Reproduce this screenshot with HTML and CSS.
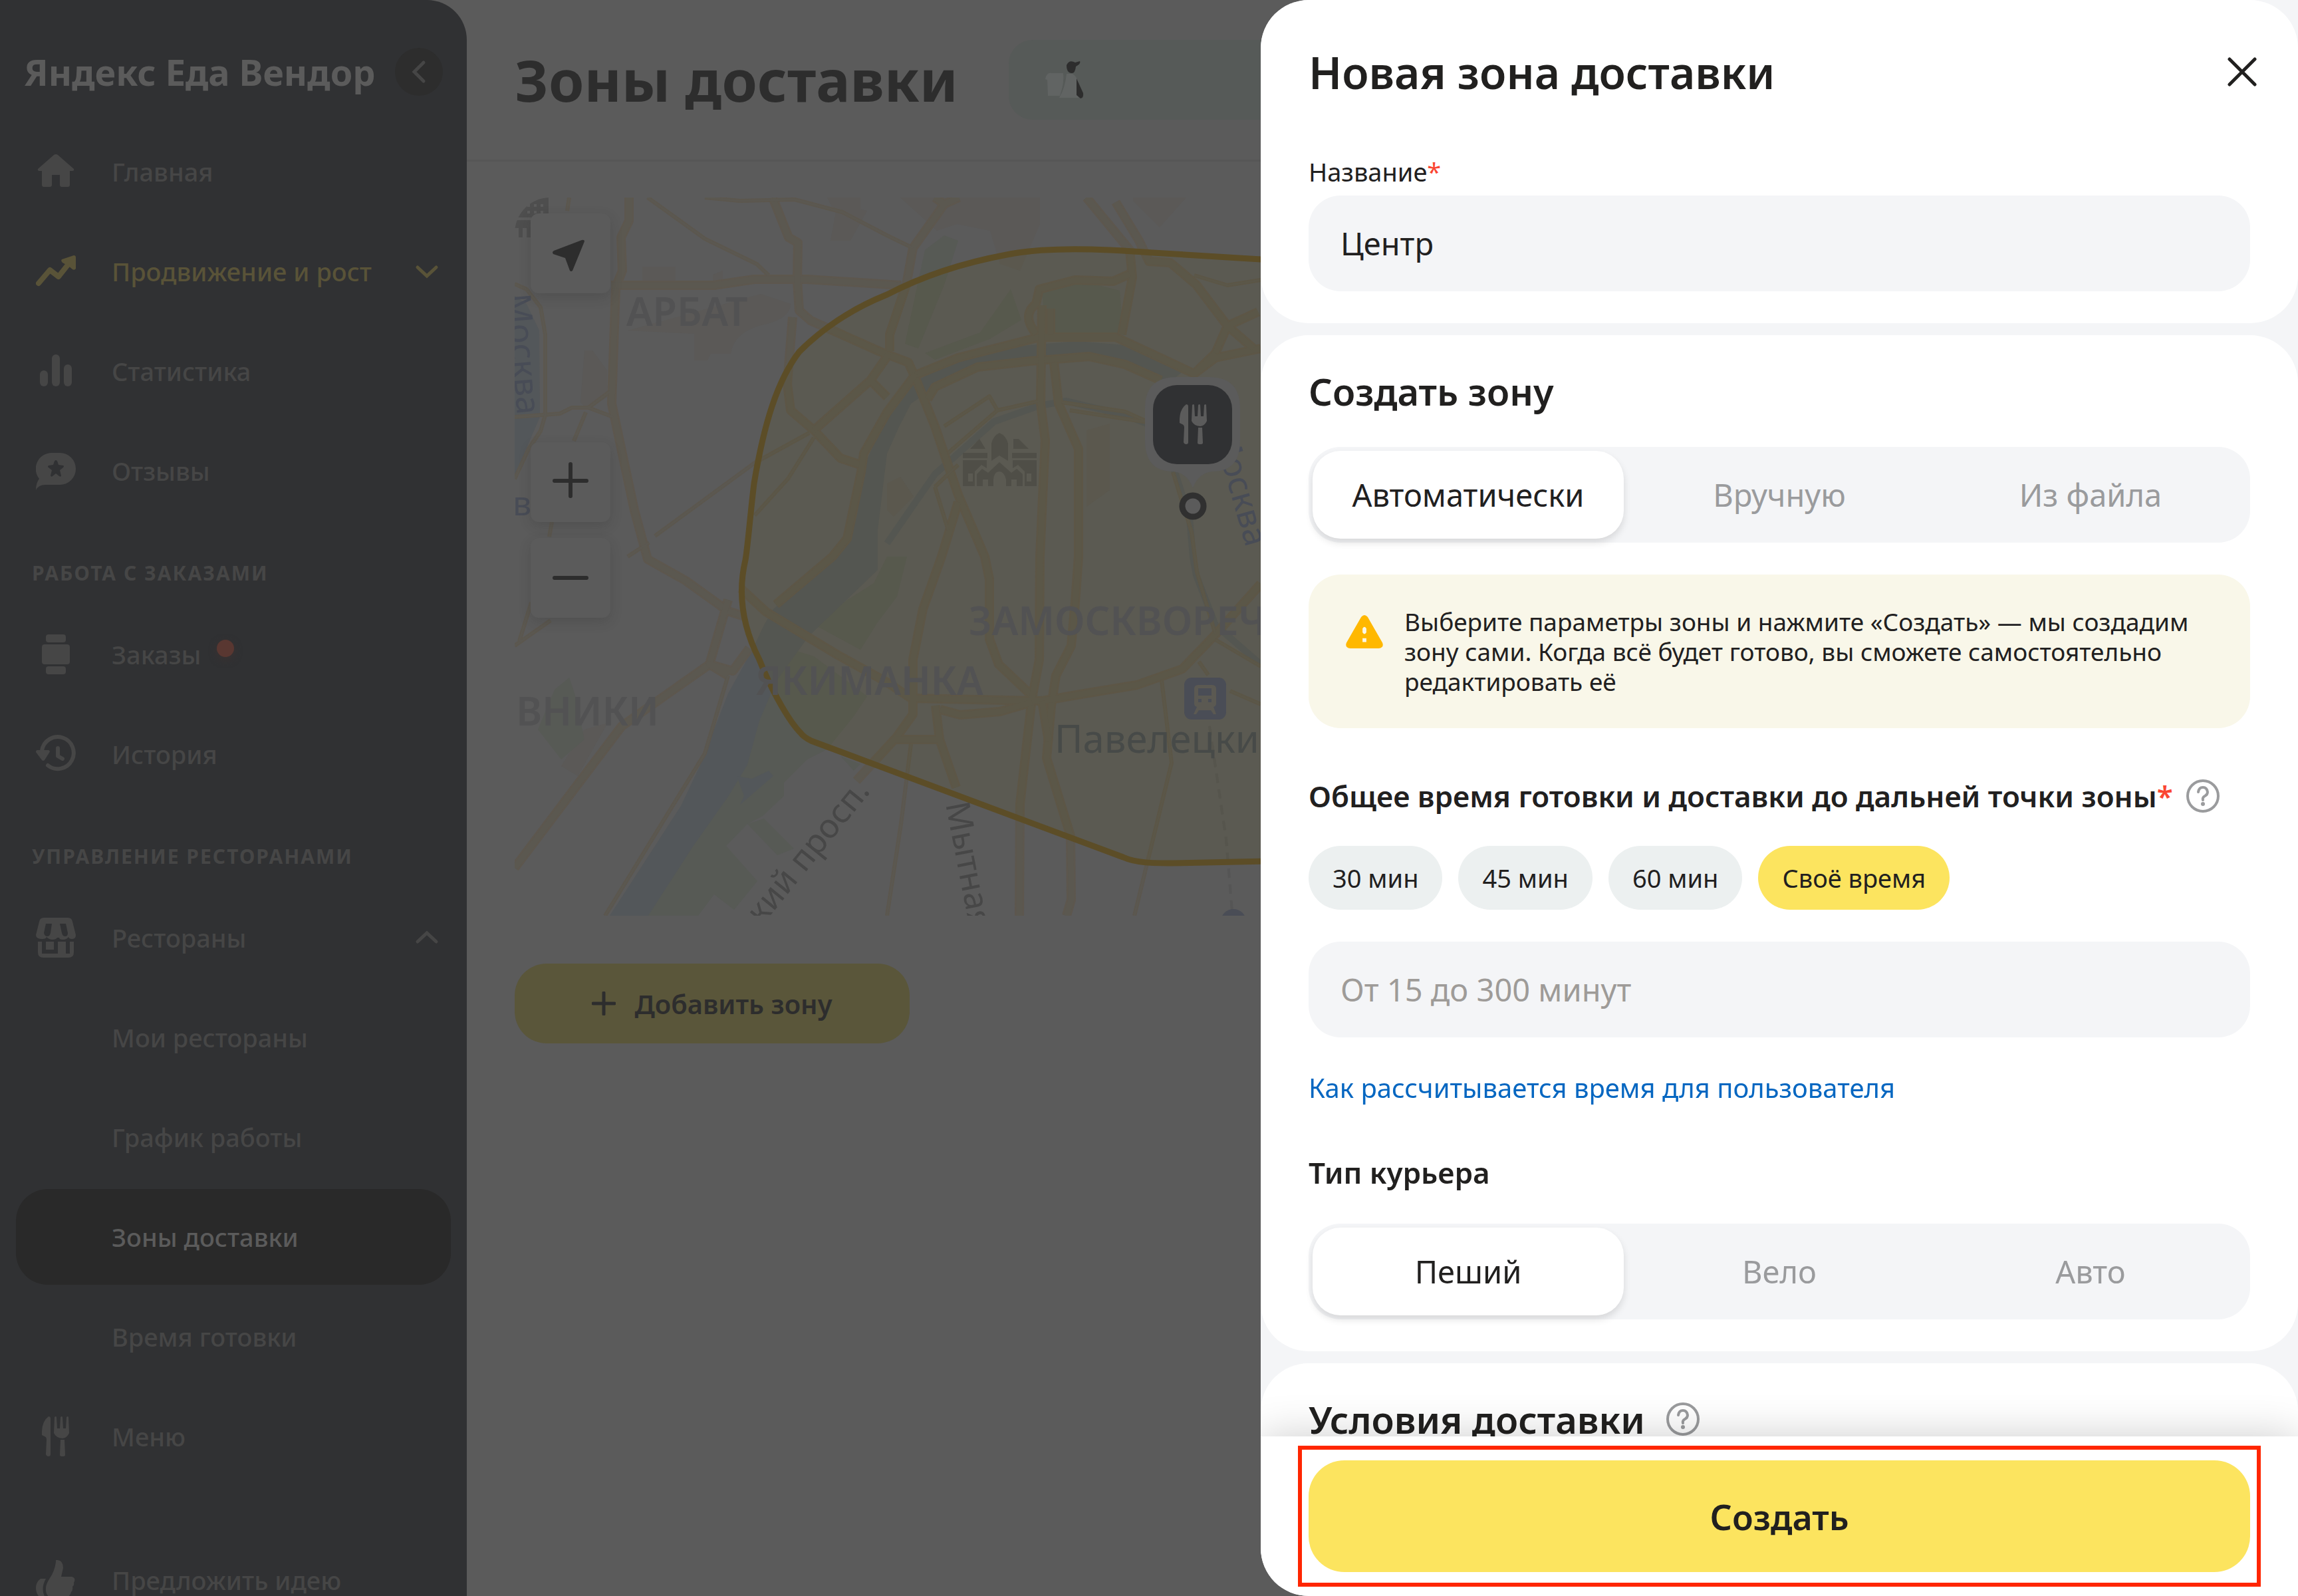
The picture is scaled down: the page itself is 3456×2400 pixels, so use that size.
FILE: index.html
```html
<!DOCTYPE html>
<html lang="ru">
<head>
  <meta charset="UTF-8" />
  <title>Зоны доставки</title>
  <link rel="stylesheet" href="styles.css">
</head>
<body>
  <svg class="sprite" aria-hidden="true">
    <symbol id="cutlery" viewBox="0 0 42 60">
      <path d="M13 3v54q0 3-3 3t-4-3l1-22q0-4-3-5l-4-2Q-1 8 10 0q3 0 3 3z" />
      <path d="M20 1q2-2 3 0l1 17h4l1-17q2-2 3 0l1 17h4l1-17q2-2 3 0l1 24q-3 7-10 8-10-1-13-8z" transform="translate(-1 0)" />
      <path d="M28 35h6l1 23q0 2-4 2t-4-2z" />
    </symbol>
    <symbol id="help" viewBox="0 0 50 50">
      <circle cx="25" cy="25" r="23" fill="none" stroke="currentColor" stroke-width="4" />
      <path d="M18 19q1-7 7-7t7 7q0 4-4 6t-3 6" fill="none" stroke="currentColor" stroke-width="4" stroke-linecap="round" />
      <circle cx="25" cy="37" r="3" fill="currentColor" />
    </symbol>
  </svg>

  <div class="app">
    <aside class="sidebar">
      <div class="sidebar-head">
        <span class="brand">Яндекс Еда Вендор</span>
        <button class="collapse" aria-label="Свернуть меню">
          <svg viewBox="0 0 72 72"><path d="M43 22 29 36l14 14" /></svg>
        </button>
      </div>

      <nav class="menu">
        <a href="#" class="menu-item">
          <svg class="menu-icon" viewBox="0 0 60 60"><path d="M30 4q2 0 3 1l24 21q1 3-2 3h-4v21q0 3-3 3H39q-3 0-3-3V35H24v15q0 3-3 3H12q-3 0-3-3V29H5q-3 0-2-3L27 5q1-1 3-1z" /></svg>
          <span>Главная</span>
        </a>
        <a href="#" class="menu-item promo">
          <svg class="menu-icon" viewBox="0 0 60 60"><path class="line" d="M4 48 21 28l13 10 15-19" /><path d="m39 12 18-6q3 0 3 3v17q-2 3-5 1l-6-5-9-5q-3-3-1-5z" /></svg>
          <span>Продвижение и рост</span>
          <svg class="chevron" viewBox="0 0 36 36"><path d="m4 12 14 13 14-13" /></svg>
        </a>
        <a href="#" class="menu-item">
          <svg class="menu-icon" viewBox="0 0 60 60"><rect x="6" y="29" width="12" height="24" rx="6" /><rect x="24" y="5" width="12" height="48" rx="6" /><rect x="42" y="20" width="12" height="33" rx="6" /></svg>
          <span>Статистика</span>
        </a>
        <a href="#" class="menu-item">
          <svg class="menu-icon" viewBox="0 0 60 60"><path fill-rule="evenodd" d="M24 3h12a24 24 0 0 1 0 48H14Q4 51 0 59 0 48 5 42A24 24 0 0 1 24 3zm6 11q-2 0-3 4l-1 3-7 1q-2 2 0 3l5 4-2 8q1 3 3 1l5-4 5 4q3 2 3-1l-2-8 5-4q2-2 0-3l-7-1-1-3q-1-4-3-4z" /></svg>
          <span>Отзывы</span>
        </a>

        <h2 class="menu-title">Работа с заказами</h2>
        <a href="#" class="menu-item">
          <svg class="menu-icon" viewBox="0 0 60 60"><rect x="15" y="0" width="30" height="12" rx="4" /><rect x="9" y="15" width="42" height="30" rx="4" /><rect x="15" y="48" width="30" height="12" rx="4" /></svg>
          <span class="has-dot">Заказы</span>
        </a>
        <a href="#" class="menu-item">
          <svg class="menu-icon" viewBox="0 0 60 60"><path class="ring" d="M9 25a24 24 0 1 1 9 22" /><path class="ring" d="M33 21v12l7 4" /><path d="M2 24h17q3 1 1 4l-7 11q-2 2-4 0L0 27q0-3 2-3z" /></svg>
          <span>История</span>
        </a>

        <h2 class="menu-title">Управление ресторанами</h2>
        <a href="#" class="menu-item">
          <svg class="menu-icon" viewBox="0 0 60 60"><path fill-rule="evenodd" d="M12 0h36q6 0 7 6l5 20q0 6-6 6-4 0-5-3-3 4-8 4-6 0-6-3h-3q-2 3-7 3-5 0-9-4-1 3-6 3-10 0-10-6L5 6q1-6 7-6zm3 9-3 14q1 5 5 5t5-5l2-14zm21 0 3 14q1 5 5 5t4-5L45 9z" /><path fill-rule="evenodd" d="M3 36h6v18h24V36h12v18h6V36h6v16q0 8-8 8H11q-8 0-8-8zm12 0h12v12H15z" /></svg>
          <span>Рестораны</span>
          <svg class="chevron" viewBox="0 0 36 36"><path d="m4 24 14-13 14 13" /></svg>
        </a>
        <a href="#" class="menu-item sub">Мои рестораны</a>
        <a href="#" class="menu-item sub">График работы</a>
        <a href="#" class="menu-item sub active">Зоны доставки</a>
        <a href="#" class="menu-item sub">Время готовки</a>
        <a href="#" class="menu-item">
          <svg class="menu-icon" viewBox="0 0 60 60"><use href="#cutlery" x="9" width="42" height="60" /></svg>
          <span>Меню</span>
        </a>
        <a href="#" class="menu-item feedback">
          <svg class="menu-icon" viewBox="0 0 60 60"><path d="M30 0q11-1 11 12l-3 13h16q7 2 3 9 1 4-2 6 1 5-2 8-2 10-16 10H27Q14 56 15 42q0-6 6-15Q28 17 30 3z" /><path d="M7 28h8q-9 16 0 30H8Q0 52 0 42q0-9 7-14z" /></svg>
          <span>Предложить идею</span>
        </a>
      </nav>
    </aside>

    <main class="main">
      <header class="page-head">
        <h1>Зоны доставки</h1>
        <div class="banner">
          <svg class="courier" viewBox="0 0 60 60"><path class="pale" d="M2 25q3-6 8-5h18q2 14-5 34H5L4 30 1 29z" /><path class="pale" d="M33 21h9q6 3 9 14v22H22q9-15 11-36z" /><path d="M33 8q4-9 13-4l7-2q2 4-6 8-1 10-6 10-8 0-8-12z" /><path d="m48 28 10 22q1 7-4 8l-6-5z" /></svg>
        </div>
      </header>

      <section class="content">
        <div class="map">
          <svg class="map-canvas" viewBox="0 0 1122 1080" preserveAspectRatio="xMinYMin meet" role="img" aria-label="Карта зоны доставки">
            <defs>
              <g id="roads">
                <path d="M172 0v35l-12 25 2 50-10 25-6 175 19 90 15 70 20 74 57 32 64 46 25 8" />
                <path d="M145 132h155l60-9h80l141 9" />
                <path d="m388 0 24 60 14 8-1 57 3 45 17 15 105 47 42 16 11 24 29 72 35 103 40 93 7 34v90l14 38 54 51" />
                <path d="m418 180-8 100 5 40 35 30 40 42 30 10" />
                <path d="m450 350 85-75 28-40M535 275l25 25" />
                <path d="m632 0 14 10 22-10M646 10l-47 66-10 55-25 75v25" />
                <path d="m603 267 64-26 122-31h115l118 55 32-24 68-14M1022 265l32-31" />
                <path d="m621 303 11-18 64-30 79-9 89-7 54 12 54 24" />
                <path d="M793 162l-2 148 7 55-8 175-1 155-11 58-18 159-1 168" />
                <path d="m811 248 7 62 30 68v162l-5 69-6 65-23 45-7 45-7 79 36 117 1 96-7 24" />
                <path d="m860 0 65 79 4 41-16 86" />
                <path d="m904 7 35 58 15 31 32 2 39 33 47 62-18 41M1072 193l46-21M1072 193l39 34" />
                <path d="M784 205q-22-28 0-45l5-22 54-14 57 2 25-11M806 205v-38" />
                <path d="m393 612 85-72 22-27 21-100 4-28 35-62 36-48 7-10" />
                <path d="m340 588 38 35 108 65 74 41 36 24 197 4 64-11 79-13 68-24 50-52 43-48 25-28" />
                <path d="m321 605-28 97-132 93L0 1008" />
                <path d="m353 678-25 34-35-10 28 17" />
                <path d="m667 458-25 82-28 79-15 76v82l-25 35-60 65" />
                <path d="m633 764 6 51 25 72M574 815h65" />
                <path d="m793 757 10 60M640 770l30 8 60-5 48-14" />
              </g>
              <g id="lanes">
                <path d="m321 719-35 117-150 244" />
                <path d="m200 0 86 62 78 38 18 17M286 0l53 5 82-2 72 19 67 35 39 19" />
                <path d="m211 509 150-110 82-45M361 478l50-55 39-62" />
                <path d="m0 330 68-5 18-9h25l32-24M111 316l37 14M107 323l-18 43" />
                <path d="m0 130 18 8 21 27 7 41v121l-7 24-18 27-21 45" />
                <path d="m596 822-15 120-21 138M973 726l15 124-56 230M1029 698l14 20" />
                <path d="m646 344 68-45 12 21 63-14M652 384l74-64M823 308l95 14 40 18M835 320l130 20" />
                <path d="m632 435 35-33M632 435l20 65M1022 117l50 15 50-8" />
                <path d="m0 674 54-38M7 667l18-58M82 0l-3 20M170 540l32-21M52 510l4-22" />
                <path d="m1054 665 68 40M1076 742l46 20M990 413l28 90 8 60 28 94" />
              </g>
            </defs>

            <g class="built">
              <path d="M192 104h50v26h-50zM298 116l15-6v20h-15zM170 200l200-55 45 15q0 20-35 30-50 10-55 45h-30l-5 10h-20v-40zM105 230h12l22 30v40l-30 18-10-10z" />
              <path d="M470 0h50v20h-40zM485 10l45 10-25 45h-30zM580 0h210v40l-30 70-30-10-15-50-50-10-30 10zM930 0h80l-40 45-40-40zM860 350l35-10v100l-35 25zM560 430l20-10 20 30-30 30-10-10zM105 800l35-10-45 80-25-15z" />
            </g>
            <g class="green">
              <path d="m82 722-22 18-25 60 35 45 35-30-15-70z" />
              <path d="m411 678-18 27-21 59-22 71-25 45-55 75-84 125h90l24-32 30 23 35-43-47-53 32-33 23-12 32-30v-20l35-35 30-15 40-50 20-30-80-60z" />
              <path d="m350 942 25-8 45 45-25 10zM490 840l20 22 10-10z" />
              <path d="m446 640 94-60 20-40h30l-15 60-30 40-25 40z" />
              <path d="m793 141 57-16 60 15 5 65H800z" />
              <path d="m617 79 29-22 21 8-21 66-39 96-20-7z" />
              <path d="m746 138 16 46-48 29-82 31-15-10 83-31z" />
            </g>
            <g class="water">
              <path d="m143 1080 107-165 28-59 43-110 36-65 18-38 14-24 93-79 32-58 14-82 32-80 14-20 32-25 44-25 53-18 72-10 71-6 72 6 89 38-25 20-64-30-54-14-89 9-72 10-71 30-36 25-18 35-18 40-14 115v60l-104 100-49 68-25 59-18 66-29 48-53 75-82 127z" />
              <path d="m0 148 18 12 19 40 1 130-13 30-25 60z" />
              <path d="m334 870 23 4 25-12 7 8-50 43 6-13z" />
              <path class="canal" d="m560 520 72-104 89-79 68-24 40-7 89 21 50 20 25 66 22 69 5 58 5 28 29 75 68 59" />
            </g>
            <use href="#roads" class="road-edge" />
            <use href="#lanes" class="lane-edge" />
            <use href="#roads" class="road-fill" />
            <use href="#lanes" class="lane-fill" />
            <path class="rail" d="M1045 795l25 170 10 120" />

            <path class="zone" d="M1180 96 1122 93 960 83C880 77 800 74 740 86 670 99 610 120 560 146 500 170 460 200 428 232 395 275 375 340 360 430 354 480 350 530 347 545 334 600 345 650 368 695 390 750 415 790 430 805 434 811 440 814 446 817L915 992C935 1001 960 1001 990 1001L1180 997" />

            <g class="blocks">
              <path fill-rule="evenodd" d="M15 0h36v30H5q0-20 10-30zm4 10v4h4v-4zm10 0v4h4v-4zm10 0v4h4v-4zM19 20v4h4v-4zm10 0v4h4v-4zm10 0v4h4v-4zM0 34h25v26H18V46h-6v14H6V46H0z" />
            </g>
            <g class="kremlin">
              <path d="m685 378 14-15 9 15zM750 378v-15l8 0 15 15zM717 396V370q3-12 12-16 10 4 13 16v26l-13-8zM674 384h37v8h-37zM748 384h37v8h-37zM674 395h36v12l-8-5-10 10v22h-18zm8 20v12h7v-12zM785 395h-36v12l8-5 10 10v22h18zm-8 20v12h-7v-12zM695 434v-18l8-8 9 6 17-16 18 16 8-6 9 8v18h-9v-10h-8v10h-8v-10q-3-12-10-12-8 0-9 12v10h-8v-10h-8v10z" fill-rule="evenodd" />
            </g>

            <g class="district">
              <text x="168" y="193">АРБАТ</text>
              <text x="683" y="658">ЗАМОСКВОРЕЧЬЕ</text>
              <text x="362" y="748">ЯКИМАНКА</text>
              <text x="217" y="794" text-anchor="end">ОВНИКИ</text>
            </g>
            <g class="river-name">
              <text transform="translate(-12 146) rotate(85)">Москва</text>
              <text transform="translate(1050 352) rotate(74)">Москва</text>
              <text x="-3" y="478">вы</text>
            </g>
            <text class="station" x="812" y="835">Павелецкий</text>
            <g class="street">
              <text transform="translate(536 893) rotate(-51)" text-anchor="end">кий просп.</text>
              <text transform="translate(648 912) rotate(79)">Мытная</text>
            </g>

            <g class="metro">
              <rect x="1007" y="722" width="63" height="63" rx="11" />
              <circle cx="1081" cy="1089" r="19" />
              <path class="metro-train" fill-rule="evenodd" d="M1028 733h21q6 0 6 6v22q0 4-4 5l4 11h-4l-4-6h-18l-4 6h-4l5-11q-4-1-4-5v-22q0-6 6-6zm0 5v11h20v-11zm0 16v5h5v-5zm15 0v5h5v-5z" />
            </g>

            <g class="pin">
              <path d="M996 270h48q47 0 47 47v48q0 47-41 47-22 2-30 25-8-23-30-25-42 0-42-47v-48q0-47 48-47z" />
              <rect class="pin-face" x="960" y="282" width="119" height="119" rx="36" />
              <use href="#cutlery" x="1000" y="311" width="42" height="60" />
              <circle class="pin-ring" cx="1020" cy="464" r="16" />
            </g>
          </svg>

          <div class="map-controls">
            <button aria-label="Моё местоположение"><svg viewBox="0 0 120 120"><path class="solid" d="M33 59q0-2 2-3l42-16q4-1 4 2L63 86q-2 2-4 0l-7-19-18-6z" /></svg></button>
            <div class="zoom">
              <button aria-label="Приблизить"><svg viewBox="0 0 120 120"><path d="M36 58h48M60 33v48" /></svg></button>
              <button aria-label="Отдалить"><svg viewBox="0 0 120 120"><path d="M36 60h48" /></svg></button>
            </div>
          </div>
        </div>

        <button class="add-zone">
          <svg viewBox="0 0 36 36"><path d="M18 2v32M2 18h32" /></svg>
          Добавить зону
        </button>
      </section>
    </main>
  </div>

  <form class="drawer">
    <div class="drawer-body">
      <section class="card">
        <div class="drawer-head">
          <h2>Новая зона доставки</h2>
          <button type="button" class="close" aria-label="Закрыть">
            <svg viewBox="0 0 44 44"><path d="m3 3 38 38M41 3 3 41" /></svg>
          </button>
        </div>
        <label class="field-label" for="zoneName">Название<span class="req">*</span></label>
        <input class="field" type="text" id="zoneName" value="Центр" />
      </section>

      <section class="card">
        <h3 class="card-title">Создать зону</h3>
        <div class="segments" role="radiogroup" aria-label="Создать зону">
          <label><input type="radio" name="mode" checked /><span>Автоматически</span></label>
          <label><input type="radio" name="mode" /><span>Вручную</span></label>
          <label><input type="radio" name="mode" /><span>Из файла</span></label>
        </div>

        <div class="notice">
          <svg viewBox="0 0 58 52"><path fill-rule="evenodd" d="M24 3q5-6 10 0l23 40q3 8-6 9H7q-9-1-6-9zm2 18v6q3 5 6 0v-6q-3-5-6 0zm0 15v6h6v-6z" /></svg>
          <p>Выберите параметры зоны и нажмите «Создать» — мы создадим зону сами. Когда всё будет готово, вы сможете самостоятельно редактировать её</p>
        </div>

        <div class="group-title">
          <label for="zoneTime">Общее время готовки и доставки до дальней точки зоны<span class="req">*</span></label>
          <button type="button" class="help" aria-label="Подсказка"><svg><use href="#help" /></svg></button>
        </div>
        <div class="chips" role="radiogroup" aria-label="Общее время">
          <label><input type="radio" name="time" /><span>30 мин</span></label>
          <label><input type="radio" name="time" /><span>45 мин</span></label>
          <label><input type="radio" name="time" /><span>60 мин</span></label>
          <label><input type="radio" name="time" checked /><span>Своё время</span></label>
        </div>
        <input class="field" type="text" id="zoneTime" placeholder="От 15 до 300 минут" />
        <a href="#" class="more">Как рассчитывается время для пользователя</a>

        <h4 class="group-title courier-title">Тип курьера</h4>
        <div class="segments" role="radiogroup" aria-label="Тип курьера">
          <label><input type="radio" name="courier" checked /><span>Пеший</span></label>
          <label><input type="radio" name="courier" /><span>Вело</span></label>
          <label><input type="radio" name="courier" /><span>Авто</span></label>
        </div>
      </section>

      <section class="card">
        <h3 class="card-title">Условия доставки
          <button type="button" class="help" aria-label="Подсказка"><svg><use href="#help" /></svg></button>
        </h3>
      </section>
    </div>

    <footer class="drawer-foot">
      <div class="highlight">
        <button type="submit" class="submit">Создать</button>
      </div>
    </footer>
  </form>
</body>
</html>
```

FILE: styles.css
```css
:root {
  --page: #5b5b5b;
  --sidebar: #303133;
  --muted: #464646;
  --dark: #2d2d2d;
  --text: #21201f;
  --yellow: #fce45f;
  --gray-bg: #f4f5f7;
  --hint: #9a9b9d;
  --radius: 48px;
}

* {
  box-sizing: border-box;
  margin: 0;
  padding: 0;
}

body {
  font-family: "Noto Sans", "Open Sans", sans-serif;
  font-size: 38px;
  color: var(--text);
  background: var(--page);
  height: 100vh;
  overflow: hidden;
}

button, input {
  font: inherit;
  color: inherit;
  border: none;
  background: none;
}

button {
  cursor: pointer;
}

a {
  color: inherit;
  text-decoration: none;
}

.sprite {
  position: absolute;
  width: 0;
  height: 0;
}

.app {
  display: flex;
  height: 100vh;
}

/* Sidebar */
.sidebar {
  width: 702px;
  flex-shrink: 0;
  background: var(--sidebar);
  border-top-right-radius: 60px;
  color: var(--muted);
  padding: 36px 24px 0;
  overflow: hidden;
}

.sidebar-head {
  display: flex;
  align-items: center;
  justify-content: space-between;
  height: 144px;
  padding: 0 12px;
}

.brand {
  font-size: 54px;
  font-weight: 700;
  color: var(--page);
  white-space: nowrap;
}

.collapse {
  width: 72px;
  height: 72px;
  border-radius: 50%;
  background: #2d2d2d;
  flex-shrink: 0;
}

.collapse path,
.chevron path {
  fill: none;
  stroke: currentColor;
  stroke-width: 5;
  stroke-linecap: round;
}

.menu {
  display: flex;
  flex-direction: column;
  gap: 6px;
  padding-top: 6px;
}

.menu-item {
  display: flex;
  align-items: center;
  height: 144px;
  padding: 0 18px 0 30px;
  gap: 54px;
  border-radius: var(--radius);
  font-weight: 500;
  white-space: nowrap;
}

.menu-icon {
  width: 60px;
  height: 60px;
  fill: currentColor;
  flex-shrink: 0;
}

.menu-icon .line,
.menu-icon .ring {
  fill: none;
  stroke: currentColor;
  stroke-width: 8;
  stroke-linecap: round;
  stroke-linejoin: round;
}

.menu-icon .ring {
  stroke-width: 6;
}

.chevron {
  width: 36px;
  height: 36px;
  margin-left: auto;
  flex-shrink: 0;
}

.menu-item.sub {
  padding-left: 144px;
}

.menu-item.active {
  background: #292929;
  color: var(--page);
}

.menu-item.promo {
  color: #595338;
}

.menu-item.feedback {
  margin-top: 66px;
}

.menu-title {
  height: 120px;
  padding: 32px 24px 0;
  line-height: 88px;
  font-size: 30px;
  font-weight: 700;
  letter-spacing: 2px;
  text-transform: uppercase;
}

.has-dot {
  position: relative;
}

.has-dot::after {
  content: "";
  position: absolute;
  left: calc(100% + 24px);
  top: 4px;
  width: 26px;
  height: 26px;
  border-radius: 50%;
  background: #593731;
  box-shadow: 0 4px 12px #3a3131;
}

/* Page */
.main {
  flex: 1;
  min-width: 0;
}

.page-head {
  display: flex;
  align-items: center;
  gap: 76px;
  height: 243px;
  padding: 0 72px;
  border-bottom: 3px solid #565656;
  color: var(--dark);
}

.page-head h1 {
  font-size: 86px;
  font-weight: 700;
  line-height: 120px;
  white-space: nowrap;
}

.banner {
  flex: 1;
  display: flex;
  align-items: center;
  height: 120px;
  padding: 0 54px;
  border-radius: 36px;
  background: #565a58;
}

.courier {
  width: 60px;
  height: 60px;
  fill: var(--dark);
}

.courier .pale {
  fill: #616463;
}

.content {
  padding: 54px 72px;
}

.map {
  position: relative;
  height: 1080px;
  border-radius: 54px 54px 0 0;
  overflow: hidden;
}

.map-canvas {
  display: block;
  width: 100%;
  height: 100%;
}

.built {
  fill: #5b5957;
}

.green {
  fill: #575a55;
}

.water {
  fill: #53575a;
}

.water .canal {
  fill: none;
  stroke: #53575a;
  stroke-width: 10;
}

.road-edge,
.road-fill,
.lane-edge,
.lane-fill {
  fill: none;
  stroke-linejoin: round;
}

.road-edge {
  stroke: #5d574e;
  stroke-width: 14;
}

.road-fill {
  stroke: #5b5850;
  stroke-width: 9;
}

.lane-edge {
  stroke: #5c574e;
  stroke-width: 6;
}

.lane-fill {
  stroke: #5b5851;
  stroke-width: 3;
}

.rail {
  fill: none;
  stroke: #555555;
  stroke-width: 4;
  stroke-dasharray: 14 10;
}

.zone {
  fill: rgba(91, 84, 22, 0.13);
  stroke: #5c4d27;
  stroke-width: 9;
}

.blocks {
  fill: #4e4e4e;
}

.kremlin {
  fill: #4f4e47;
}

.district {
  font-size: 59px;
  font-weight: 600;
  fill: #525253;
}

.river-name {
  font-size: 50px;
  fill: #484c56;
}

.station {
  font-size: 58px;
  fill: #474a48;
}

.street {
  font-size: 50px;
  fill: #474747;
}

.metro {
  fill: #4a4d56;
}

.metro-train {
  fill: #5b5952;
}

.pin {
  fill: var(--page);
}

.pin-face {
  fill: var(--sidebar);
}

.pin-ring {
  stroke: #303030;
  stroke-width: 9;
}

.map-controls {
  position: absolute;
  left: 24px;
  top: 24px;
  display: flex;
  flex-direction: column;
  gap: 224px;
}

.map-controls button {
  display: block;
  width: 120px;
  height: 120px;
  border-radius: 12px;
  background: var(--page);
  box-shadow: 0 6px 18px rgba(40, 40, 40, 0.2);
}

.map-controls path {
  stroke: var(--dark);
  stroke-width: 6;
  stroke-linecap: round;
}

.map-controls .solid {
  fill: var(--dark);
  stroke: none;
}

.zoom {
  display: flex;
  flex-direction: column;
  gap: 24px;
}

.add-zone {
  display: inline-flex;
  align-items: center;
  justify-content: center;
  gap: 28px;
  width: 594px;
  height: 120px;
  margin-top: 72px;
  border-radius: var(--radius);
  background: #5a563a;
  color: var(--dark);
  font-size: 40px;
  font-weight: 600;
}

.add-zone svg {
  width: 36px;
  height: 36px;
  stroke: currentColor;
  stroke-width: 5;
  stroke-linecap: round;
}

/* Drawer */
.drawer {
  position: fixed;
  top: 0;
  right: 0;
  bottom: 0;
  width: min(1560px, 100%);
  display: flex;
  flex-direction: column;
  background: var(--gray-bg);
  border-radius: 72px 0 0 72px;
  overflow: hidden;
}

.drawer-body {
  flex: 1;
  min-height: 0;
  overflow: hidden;
  display: flex;
  flex-direction: column;
  gap: 18px;
}

.card {
  flex-shrink: 0;
  padding: 48px 72px;
  border-radius: 72px;
  background: #fff;
}

.drawer-head {
  display: flex;
  align-items: center;
  justify-content: space-between;
  height: 120px;
  margin-bottom: 66px;
}

.drawer-head h2 {
  font-size: 66px;
  font-weight: 600;
}

.close svg {
  display: block;
  width: 44px;
  height: 44px;
  stroke: var(--text);
  stroke-width: 5;
  stroke-linecap: round;
}

.close {
  margin-right: -10px;
}

.field-label {
  display: block;
  line-height: 48px;
  margin-bottom: 12px;
}

.req {
  color: #fa4632;
}

.field {
  display: block;
  width: 100%;
  height: 144px;
  padding: 0 48px;
  border-radius: var(--radius);
  background: var(--gray-bg);
  font-size: 47px;
  outline: none;
}

.field::placeholder {
  color: #9e9b98;
}

.card-title {
  display: flex;
  align-items: center;
  gap: 32px;
  font-size: 56px;
  font-weight: 600;
  line-height: 72px;
  margin-bottom: 48px;
}

.segments {
  display: flex;
  height: 144px;
  padding: 6px;
  border-radius: var(--radius);
  background: var(--gray-bg);
}

.segments label {
  position: relative;
  flex: 1;
  cursor: pointer;
}

.segments input,
.chips input {
  position: absolute;
  opacity: 0;
}

.segments span {
  display: flex;
  align-items: center;
  justify-content: center;
  height: 100%;
  border-radius: 42px;
  font-size: 47px;
  color: var(--hint);
}

.segments input:checked + span {
  background: #fff;
  color: var(--text);
  box-shadow: 0 6px 12px rgba(0, 0, 0, 0.12);
}

.notice {
  display: flex;
  gap: 32px;
  margin-top: 48px;
  padding: 48px 56px;
  border-radius: var(--radius);
  background: #f9f7e9;
}

.notice svg {
  width: 56px;
  height: 52px;
  margin-top: 12px;
  fill: #ffb800;
  flex-shrink: 0;
}

.notice p {
  font-size: 37px;
  line-height: 45px;
}

.group-title {
  display: flex;
  align-items: center;
  gap: 20px;
  margin-top: 72px;
  font-size: 44px;
  font-weight: 600;
  line-height: 60px;
  white-space: nowrap;
}

.help {
  width: 50px;
  height: 50px;
  color: var(--hint);
  flex-shrink: 0;
}

.help svg {
  display: block;
  width: 50px;
  height: 50px;
}

.chips {
  display: flex;
  gap: 24px;
  margin: 45px 0 48px;
}

.chips label {
  position: relative;
  cursor: pointer;
}

.chips span {
  display: block;
  padding: 0 36px;
  border-radius: var(--radius);
  background: #ecf0f0;
  font-size: 38px;
  line-height: 96px;
}

.chips input:checked + span {
  background: var(--yellow);
}

.more {
  display: block;
  margin-top: 48px;
  font-size: 40px;
  line-height: 56px;
  color: #0667c1;
}

.courier-title {
  margin: 69px 0 47px;
}

.drawer-foot {
  position: relative;
  padding: 14px 56px;
  background: #fff;
  box-shadow: 0 0 60px rgba(0, 0, 0, 0.2);
}

/* Frame that points at the action */
.highlight {
  padding: 16px 10px;
  border: 6px solid #ff2600;
}

.submit {
  display: block;
  width: 100%;
  height: 168px;
  border-radius: 54px;
  background: var(--yellow);
  font-size: 52px;
  font-weight: 600;
}
```
